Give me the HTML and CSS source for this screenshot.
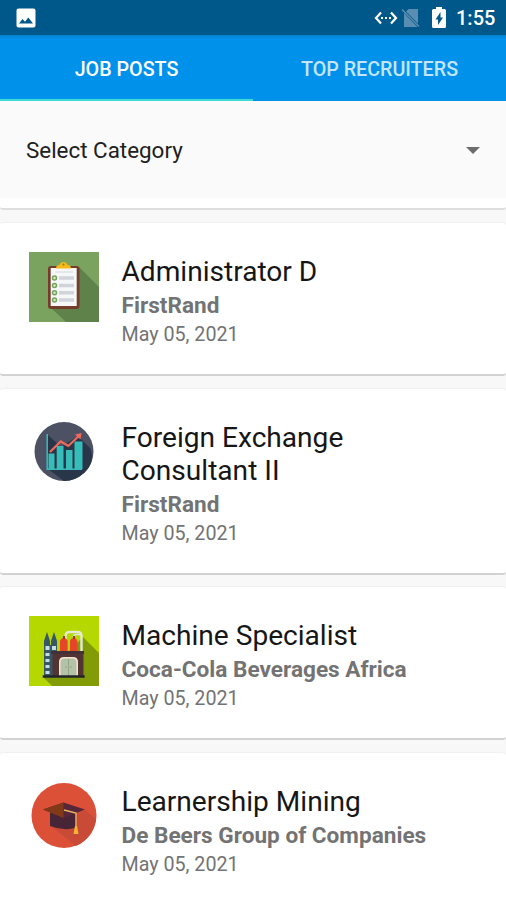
FILE: index.html
```html
<!DOCTYPE html>
<html lang="en">
<head>
<meta charset="utf-8">
<title>Job Posts</title>
<link rel="stylesheet" href="styles.css">
</head>
<body>
<header class="status">
  <svg class="picture" viewBox="0 0 20 20"><rect x=".5" y=".5" width="19" height="19" rx="2" fill="#fff"/><path d="M3 15.500 6.500 11l2.500 2.800L12.300 9.500 17 15.500z" fill="#005789"/></svg>
  <div class="status-right">
    <svg class="ethernet" viewBox="0 0 24 14"><path d="M7 1.500 2 7l5 5.500M17 1.500 22 7l-5 5.500" fill="none" stroke="#fff" stroke-width="2.200"/><path d="M7 6h2v2H7zM11 6h2v2h-2zM15 6h2v2h-2z" fill="#fff"/></svg>
    <svg class="nosim" viewBox="0 0 20 20"><path d="M7.500 1H17v14.500L5 3.500zM3 5v14h13.500z" fill="#5a8db2"/><path d="M1 1.500 18 18.500" stroke="#5a8db2" stroke-width="1.400"/></svg>
    <svg class="battery" viewBox="0 0 14 21"><path d="M4 0h6v2h2.500q1.500 0 1.500 1.500v16q0 1.500-1.500 1.500h-11Q0 21 0 19.500v-16Q0 2 1.500 2H4z" fill="#fff"/><path d="M8.500 5 3.500 12.500H6V18l5-7.500H8.500z" fill="#005789"/></svg>
    <span class="clock">1:55</span>
  </div>
</header>
<nav class="tabs">
  <div class="tab active"><span>JOB POSTS</span></div>
  <div class="tab"><span>TOP RECRUITERS</span></div>
</nav>
<main>
  <section class="filter">
    <div class="select"><span>Select Category</span><i class="arrow"></i></div>
  </section>
  <article class="card">
    <svg class="thumb" viewBox="0 0 72 72">
      <path d="M1 1h70v70H1z" fill="#79a35e"/><path d="M51 16 71 36v35H38L22 56z" fill="#5f824b"/>
      <rect x="20" y="15" width="31.500" height="43" rx="3" fill="#743c2b"/><path d="M22.700 17h26v38h-26z" fill="#f6f7f9"/>
      <path d="M28 17.500q0-3.500 3.500-3.500 1-3 4-3t4 3q3.500 0 3.500 3.500z" fill="#f6b91b"/><circle cx="35.500" cy="13.500" r="1" fill="#9a7628"/>
      <path d="M27 21h18" stroke="#d4d7dc" stroke-width="1"/>
      <path d="M31 27h15M31 34.500h15M31 41.800h15M31 49h15" stroke="#d2d4dc" stroke-width="3.400"/>
      <g fill="#d8eccb" stroke="#73a35b" stroke-width="1.500"><circle cx="26.500" cy="27" r="2"/><circle cx="26.500" cy="34.500" r="2"/><circle cx="26.500" cy="41.800" r="2"/><circle cx="26.500" cy="49" r="2"/></g>
    </svg>
    <div class="info"><h2>Administrator D</h2><h3>FirstRand</h3><time>May 05, 2021</time></div>
  </article>
  <article class="card">
    <svg class="thumb" viewBox="0 0 72 72">
      <circle cx="36" cy="35.500" r="29.500" fill="#4c5163"/>
      <path d="M20 19 33 31 50 20l12 12q6 14-6 25-9 8-20 8l-16-12z" fill="#293548"/>
      <path d="M19.200 18v35.300H54" fill="none" stroke="#37bdb9" stroke-width="1.500"/>
      <path d="M20.500 37.500h6V53h-6zM28.700 30h6.800v23h-6.800zM38 34h6.500v19H38zM46.500 25.500h8V53h-8z" fill="#37bdb9"/>
      <path d="m22 36 10.700-10.500 7.600 4.500 10.500-10" fill="none" stroke="#ee6a5c" stroke-width="2.200"/><path d="m47 18.500 6.500-1.500-1 6.500z" fill="#ee6a5c"/>
    </svg>
    <div class="info"><h2>Foreign Exchange Consultant II</h2><h3>FirstRand</h3><time>May 05, 2021</time></div>
  </article>
  <article class="card">
    <svg class="thumb" viewBox="0 0 72 72">
      <path d="M1 1h70v70H1z" fill="#b4d800"/><path d="M55 22 71 38v33H24l-9-9z" fill="#829c08"/>
      <path d="M37.500 24v-3q0-4 4-4h8q4 0 4 4v16" fill="none" stroke="#e4ead7" stroke-width="2.400"/><path d="M45.500 22q0-2.500 3-2.500h4" fill="none" stroke="#e4ead7" stroke-width="1.600"/>
      <path d="M16 62V26l3-9 3 9v4h1v-4l3-9 3 9v36z" fill="#375767"/>
      <path d="M17.500 31h4v4h-4zM24 31h4v4h-4zM17.500 38h4v3h-4zM17.500 44h4v3h-4zM17.500 50h4v3h-4zM17.500 56h4v3h-4z" fill="#cbdde4"/>
      <path d="M32 37V26q1-3 3.800-3t3.800 3v11zM42 37V26q1-3 3.700-3t3.700 3v11z" fill="#e64529"/><path d="M35 21h2v3h-2zM45 21h2v3h-2z" fill="#a52f28"/>
      <path d="M24.500 38h31v24h-31z" fill="#543335"/><path d="M23 36h33v3H23z" fill="#433038"/>
      <path d="M31 61V47q0-5 5-5h9q5 0 5 5v14z" fill="#f4e3cf"/><path d="M32.500 61V48q0-4.500 4-4.500h8q4 0 4 4.500v13z" fill="#b4c3a8"/><path d="M40.500 44v17M37 52h2M42 52h2" stroke="#899b80" stroke-width=".8"/>
      <path d="M14.700 60.300h42v2.500h-42z" fill="#22262b"/>
    </svg>
    <div class="info"><h2>Machine Specialist</h2><h3>Coca-Cola Beverages Africa</h3><time>May 05, 2021</time></div>
  </article>
  <article class="card last">
    <svg class="thumb" viewBox="0 0 72 72">
      <circle cx="36" cy="35.500" r="32.500" fill="#dc5038"/><path d="m57 30 11 9q-3 19-20 27L23 46z" fill="#c94a36"/>
      <path d="M22 33v13q13 5 25.500 2V33z" fill="#472536"/><path d="m15 29.500 20.500-7L57 29.500 36 38z" fill="#57263a"/><path d="m15 29.500 20.500-7V38z" fill="#823917"/>
      <path d="m36 30 12 3v14" fill="none" stroke="#e8b660" stroke-width="1.300"/><path d="M47 46h2l1.500 8h-5z" fill="#f4b534"/>
    </svg>
    <div class="info"><h2>Learnership Mining</h2><h3>De Beers Group of Companies</h3><time>May 05, 2021</time></div>
  </article>
</main>
</body>
</html>
```
FILE: styles.css
```css
* { box-sizing: border-box; }
body { margin: 0; width: 506px; height: 900px; overflow: hidden; background: #f8f8f8; font-family: Roboto, sans-serif; }
svg { display: block; flex: none; }
.status { height: 35px; padding: 0 10px 0 16px; display: flex; align-items: center; justify-content: space-between; background: #005789; color: #fff; }
.picture { width: 20px; height: 20px; }
.status-right { display: flex; align-items: center; }
.ethernet { width: 24px; height: 14px; margin-right: -1px; }
.nosim { width: 20px; height: 20px; margin-left: 4px; }
.battery { width: 14px; height: 21px; margin-left: 11px; }
.clock { margin-left: 10px; padding-top: 1px; font-size: 20px; font-weight: 500; line-height: 34px; width: 40px; white-space: nowrap; }
.tabs { height: 66px; display: flex; background: linear-gradient(#0580ce, #0091ea 4px); }
.tab { flex: 1; display: flex; align-items: center; justify-content: center; padding-top: 4px; border-bottom: 2px solid transparent; color: #c4e5fa; font-size: 19.700px; font-weight: 500; }
.active { color: #fff; border-color: #3cdbd5; }
.filter { height: 109px; margin-bottom: 13px; background: #fff; border-bottom: 2px solid #dedede; border-radius: 0 0 3px 3px; }
.select { height: 97px; padding: 1px 26px 0; display: flex; align-items: center; justify-content: space-between; background: #fafafa; color: #202020; font-size: 22.400px; }
.arrow { border: 7px solid transparent; border-top-color: #6c6c6c; border-bottom: 0; }
.card { display: flex; min-height: 153px; margin-bottom: 12.500px; padding: 28px 20px 26px 27.500px; background: #fff; border-radius: 3px; border-bottom: 2px solid #d2d2d2; box-shadow: 0 -1px 1px #efefef; }
.last { border: 0; margin: 0; }
.thumb { width: 72px; height: 72px; margin-top: -.5px; }
.info { margin-left: 22px; padding-top: 4px; width: 310px; }
h2, h3 { margin: 0; white-space: nowrap; }
h2 { width: 260px; font-size: 28.100px; font-weight: 400; line-height: 33px; color: #161616; white-space: normal; }
h3 { margin-top: 4px; font-size: 22.600px; font-weight: 700; line-height: 28px; color: #737373; }
time { display: block; margin-top: 2px; font-size: 19.700px; line-height: 26px; color: #737373; }
```
